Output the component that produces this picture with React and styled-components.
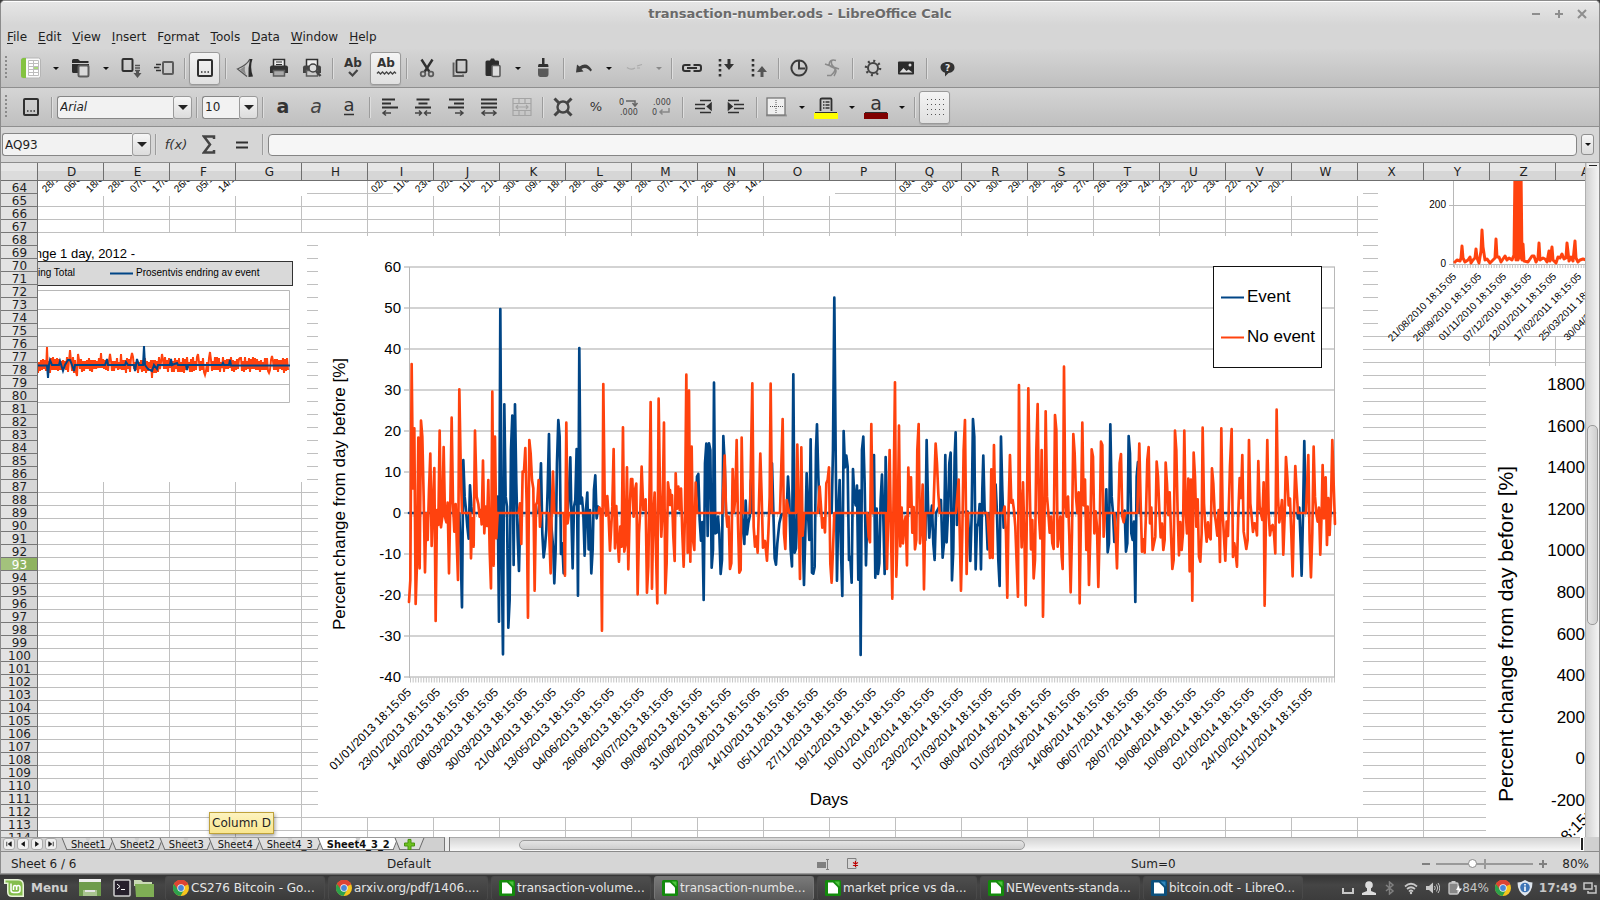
import React from "react";
import styled, { createGlobalStyle, css } from "styled-components";

const UI = `"DejaVu Sans", sans-serif`;
const UI_NARROW = `"DejaVu Sans Condensed", "DejaVu Sans", sans-serif`;
const CHART = `"Liberation Sans", Arial, sans-serif`;
const ORANGE = "#ff420e";
const BLUE = "#004586";
const INK = "#303030";
const SOFT = "#5c5c5c";

const GlobalStyle = createGlobalStyle`
  *, *::before, *::after { box-sizing: border-box; }
  body { margin: 0; background: #3c3c3c; overflow: hidden; }
  button, input { font: inherit; color: inherit; margin: 0; padding: 0; }
  button { border: 0; background: none; cursor: default; }
  svg { display: block; flex: none; }
`;

const Screen = styled.div`
  height: 100vh;
  display: flex;
  flex-direction: column;
  font: 12px/16px ${UI};
  color: #1f1f1f;
`;

const Window = styled.div`
  flex: 1;
  min-height: 0;
  display: flex;
  flex-direction: column;
  border: 1px solid #8c8c8c;
  border-bottom: 0;
  border-radius: 5px 5px 0 0;
  background: #d6d6d6;
  overflow: hidden;
`;

const TitleBar = styled.header`
  height: 24px;
  flex: none;
  display: grid;
  grid-template-columns: 1fr auto 1fr;
  align-items: center;
  padding: 0 12px;
  border-top: 1px solid #fff;
  background: linear-gradient(#e6e6e6, #d6d6d6);
`;

const Title = styled.h1`
  grid-column: 2;
  margin: 0;
  font: bold 13px/16px ${UI};
  color: #6a6a6a;
  text-shadow: 0 1px 0 #f4f4f4;
`;

const WindowButtons = styled.div`
  display: flex;
  justify-content: flex-end;
  gap: 13px;
  color: #8e8e8e;
`;

const MenuBar = styled.nav`
  height: 24px;
  flex: none;
  display: flex;
  align-items: center;
  padding-left: 1px;
`;

const MenuItem = styled.button`
  padding: 0 6px 0 5px;
  u { text-underline-offset: 2px; }
`;

const Toolbar = styled.div`
  height: 39px;
  flex: none;
  display: flex;
  align-items: center;
  padding-left: 4px;
  border-bottom: 1px solid #8f8f8f;
  background: linear-gradient(#d5d5d5, #bfbfbf);
`;

const Handle = styled.span`
  width: 9px;
  height: 24px;
  background: radial-gradient(circle at 1px 1px, #8a8a8a 1px, transparent 1px) 0 0 / 9px 4px;
`;

const ToolButton = styled.button`
  width: 33px;
  height: 33px;
  display: flex;
  align-items: center;
  justify-content: center;
  color: ${INK};
  ${(p) =>
    p.$on &&
    css`
      width: 31px;
      margin: 0 1px;
      border: 1px solid #9a9a9a;
      border-radius: 3px;
      background: linear-gradient(#f4f4f4, #e0e0e0);
      box-shadow: 0 1px 1px #aaa;
    `}
`;

const DropArrow = styled.button`
  width: 17px;
  height: 33px;
  display: flex;
  align-items: center;
  justify-content: center;
  opacity: ${(p) => (p.$dim ? 0.35 : 1)};
  &::after {
    content: "";
    border: 3px solid transparent;
    border-top-color: #111;
    border-bottom: 0;
  }
`;

const Sep = styled.span`
  width: 8px;
  height: 21px;
  background: linear-gradient(90deg, transparent 4px, #9c9c9c 4px, #9c9c9c 5px, #dedede 5px, #dedede 6px, transparent 6px);
`;

const Combo = styled.div`
  width: ${(p) => p.$w}px;
  height: 23px;
  flex: none;
  display: flex;
  margin-left: ${(p) => p.$gap}px;
`;

const ComboInput = styled.input`
  flex: 1;
  min-width: 0;
  height: 23px;
  padding-left: 2px;
  border: 1px solid #868686;
  border-right: 0;
  border-radius: 3px 0 0 3px;
  background: #f2f2f2;
  font-style: ${(p) => (p.$italic ? "italic" : "normal")};
  outline: 0;
`;

const ComboButton = styled.button`
  width: 19px;
  height: 23px;
  display: flex;
  align-items: center;
  justify-content: center;
  border: 1px solid #9a9a9a;
  border-radius: 3px;
  background: linear-gradient(#f6f6f6, #dcdcdc);
  &::after {
    content: "";
    border: 5px solid transparent;
    border-top-color: #222;
    border-bottom: 0;
  }
`;

const FormulaBar = styled.div`
  height: 36px;
  flex: none;
  display: flex;
  align-items: center;
  border-bottom: 1px solid #8c8c8c;
  background: #d6d6d6;
`;

const FormulaInput = styled.input`
  flex: 1;
  height: 22px;
  border: 1px solid #858585;
  border-radius: 4px;
  background: #f6f6f6;
  outline: 0;
  margin: 0 4px 0 2px;
`;

const FormulaExpand = styled.button`
  width: 13px;
  height: 21px;
  margin-right: 5px;
  display: flex;
  align-items: center;
  justify-content: center;
  border: 1px solid #8f8f8f;
  border-radius: 3px;
  background: linear-gradient(#f6f6f6, #dcdcdc);
  &::after {
    content: "";
    border: 3px solid transparent;
    border-top-color: #111;
    border-bottom: 0;
  }
`;

const Workspace = styled.main`
  flex: 1;
  min-height: 0;
  display: flex;
`;

const Sheet = styled.div`
  flex: 1;
  min-width: 0;
  display: grid;
  grid-template-columns: 37px 1fr;
  grid-template-rows: 18px 1fr;
  overflow: hidden;
`;

const Corner = styled.div`
  border-right: 1px solid #6f6f6f;
  border-bottom: 1px solid #6f6f6f;
  background: linear-gradient(#e6e6e6 50%, #dcdcdc 50%);
`;

const ColumnHeads = styled.div`
  display: flex;
  overflow: hidden;
  border-bottom: 1px solid #6f6f6f;
  background: linear-gradient(#e6e6e6 50%, #d6d6d6 50%);
`;

const ColumnHead = styled.div`
  flex: none;
  width: 66px;
  padding-left: 2px;
  line-height: 19px;
  text-align: center;
  border-right: 1px solid #6f6f6f;
`;

const RowHeads = styled.div`
  min-height: 0;
  overflow: hidden;
  border-right: 1px solid #6f6f6f;
  background: linear-gradient(90deg, #e3e3e3 50%, #d6d6d6 50%);
`;

const RowHead = styled.div`
  height: 13px;
  line-height: 15px;
  padding-left: 1px;
  text-align: center;
  border-bottom: 1px solid #777;
  ${(p) =>
    p.$active &&
    css`
      color: #fff;
      background: linear-gradient(90deg, #a3c27c 50%, #8fb360 50%);
    `}
`;

const Cells = styled.div`
  position: relative;
  min-height: 0;
  overflow: hidden;
  background:
    linear-gradient(90deg, transparent 65px, #c0c0c0 65px) 0 0 / 66px 13px,
    linear-gradient(transparent 12px, #c0c0c0 12px) 0 0 / 66px 13px,
    #fff;
`;

const ChartFrame = styled.figure`
  position: absolute;
  left: ${(p) => p.$x}px;
  top: ${(p) => p.$y}px;
  margin: 0;
  background: #fff;
  svg { overflow: ${(p) => (p.$spill ? "visible" : "hidden")}; }
`;

const Tip = styled.div`
  position: absolute;
  left: 171px;
  top: 631px;
  height: 22px;
  padding: 0 2px;
  line-height: 20px;
  border: 1px solid #bfa23a;
  background: linear-gradient(#fdf3bf, #f9e68f);
  box-shadow: 1px 2px 4px #0006;
`;

const VScroll = styled.div`
  width: 14px;
  flex: none;
  display: flex;
  flex-direction: column;
  align-items: center;
  border-left: 1px solid #b0b0b0;
  background: linear-gradient(90deg, #d2d2d2, #f4f4f4);
`;

const SplitGrip = styled.span`
  width: 12px;
  height: 5px;
  border: 2px solid #eee;
  border-width: 2px 2px;
  background: #222;
`;

const VThumb = styled.span`
  width: 11px;
  height: 200px;
  margin-top: 257px;
  border: 1px solid #9b9b9b;
  border-radius: 5px;
  background: linear-gradient(90deg, #e6e6e6, #cfcfcf);
`;

const TabStrip = styled.div`
  height: 15px;
  flex: none;
  display: flex;
  border-bottom: 1px solid #8a8a8a;
  background: #d0d0d0;
`;

const TabArea = styled.div`
  width: 444px;
  flex: none;
  display: flex;
  align-items: flex-start;
  border-top: 1px solid #9a9a9a;
  border-right: 1px solid #777;
`;

const TabNav = styled.div`
  display: flex;
  gap: 2px;
  padding: 0 7px 0 2px;
`;

const NavButton = styled.button`
  width: 12px;
  height: 12px;
  display: flex;
  align-items: center;
  justify-content: center;
  border: 1px solid #aaa;
  border-radius: 3px;
  background: #f0f0f0;
`;

const Tab = styled.button`
  position: relative;
  z-index: 0;
  height: 12px;
  padding: 0 7px;
  font: ${(p) => (p.$active ? "bold" : "normal")} 11px/11px ${UI_NARROW};
  color: #111;
  &::before, &::after {
    content: "";
    position: absolute;
    z-index: -1;
    top: 0;
    bottom: 0;
    border-bottom: 1px solid #777;
    background: ${(p) => (p.$active ? "#fff" : "#dedede")};
  }
  &::before { left: 0; right: 50%; border-left: 1px solid #666; transform: skewX(22deg); }
  &::after { left: 50%; right: 0; border-right: 1px solid #666; transform: skewX(-22deg); }
`;

const Splitter = styled.span`
  width: 5px;
  background: #ececec;
  border-right: 1px solid #777;
`;

const HScroll = styled.div`
  flex: 1;
  display: flex;
  align-items: center;
  border-top: 1px solid #aaa;
  background: linear-gradient(#d4d4d4, #f8f8f8);
`;

const HThumb = styled.span`
  width: 506px;
  height: 10px;
  margin-left: 69px;
  border: 1px solid #9b9b9b;
  border-radius: 5px;
  background: linear-gradient(#e4e4e4, #cecece);
`;

const HGrip = styled.span`
  width: 4px;
  margin-right: 15px;
  background: #222;
  border: 1px solid #fff;
`;

const StatusBar = styled.footer`
  height: 22px;
  flex: none;
  display: grid;
  grid-template-columns: 376fr 430fr 314fr 458fr;
  align-items: center;
  padding: 2px 10px 0;
  border-bottom: 1px solid #9a9a9a;
`;

const StatusIcons = styled.span`
  display: flex;
  align-items: center;
  gap: 18px;
`;

const StatusRight = styled.div`
  display: flex;
  justify-content: space-between;
`;

const Zoom = styled.div`
  display: flex;
  align-items: center;
  gap: 6px;
  color: #808080;
  output { width: 36px; text-align: right; color: #1f1f1f; }
`;

const ZoomSlider = styled.input`
  appearance: none;
  width: 97px;
  height: 12px;
  background:
    linear-gradient(#999, #999) 48px 1px / 2px 10px no-repeat,
    linear-gradient(#999, #999) 0 5px / 100% 2px no-repeat;
  &::-webkit-slider-thumb {
    appearance: none;
    width: 9px;
    height: 9px;
    border: 1px solid #8a8a8a;
    border-radius: 50%;
    background: #fff;
  }
`;

const TaskBar = styled.nav`
  height: 26px;
  flex: none;
  display: flex;
  align-items: center;
  padding: 0 3px 0 4px;
  color: #e6e6e6;
  border-top: 1px solid #6a6a6a;
  background: linear-gradient(#353535, #454545 40%, #3c3c3c);
`;

const StartButton = styled.button`
  display: flex;
  align-items: center;
  gap: 7px;
  width: 75px;
  font-weight: bold;
  color: #cfcfcf;
`;

const Launchers = styled.div`
  display: flex;
  align-items: center;
  width: 86px;
  gap: 3px;
  button:first-child { margin-right: 9px; }
`;

const TaskList = styled.div`
  flex: 1;
  min-width: 0;
  display: flex;
  gap: 3px;
`;

const TaskButton = styled.button`
  width: 160px;
  height: 24px;
  display: flex;
  align-items: center;
  gap: 2px;
  padding-left: 7px;
  white-space: nowrap;
  border-radius: 3px;
  border: 1px solid ${(p) => (p.$active ? "#777" : "#4a4a4a")};
  border-bottom: 0;
  background: ${(p) => (p.$active ? "linear-gradient(#7a7a7a, #585858)" : "linear-gradient(#4e4e4e, #3a3a3a)")};
`;

const Tray = styled.div`
  display: flex;
  align-items: center;
  gap: 6px;
  color: #c8c8c8;
`;

const TrayStatus = styled.div`
  display: flex;
  align-items: center;
  gap: 8px;
`;

const Battery = styled.span`
  display: flex;
  align-items: center;
`;

const Clock = styled.time`
  font-weight: bold;
`;

/* ---------- toolbar drawings ---------- */

const Ab = ({ children }) => (
  <>
    <text x="10" y="9" textAnchor="middle" fontFamily="DejaVu Sans" fontWeight="bold" fontSize="12" fill="#333">Ab</text>
    {children}
  </>
);

const glyphs = {
  sheet: (
    <>
      <rect x="0.5" y="0" width="19" height="20" rx="2" fill="#fafafa" stroke="#b5b5b5" />
      <path d="M2.500 0H5V20H2.500Q0 20 0 17.500V2.500Q0 0 2.500 0Z" fill="#84c341" />
      <path d="M7 2.500h10v15H7z" fill="#fff" />
      <path d="M12.500 8.500H17V12H12.500z" fill="#a8d97a" />
      <path d="M7.500 2.500h10v15h-10zM7.500 5.500h10M7.500 8.500h10M7.500 11.500h10M7.500 14.500h10M12.500 2.500v15" fill="none" stroke="#bdbdbd" />
    </>
  ),
  open: (
    <>
      <path d="M1 2.500Q1 1 2.500 1H7l2 2h8.500V5H1zM1 6H18V9H7V15H2.500Q1 15 1 13.500Z" fill="#2c2c2c" />
      <rect x="7.500" y="7.500" width="10" height="11" rx="1.500" fill="#dadada" stroke={SOFT} strokeWidth="2" />
    </>
  ),
  save: (
    <>
      <rect x="1.500" y="1" width="10" height="12" rx="1" fill="none" stroke={INK} strokeWidth="2" />
      <path d="M14 7.500h5M14 10h5M14 12.500h5" stroke="#555" strokeWidth="1.300" />
      <path d="M15 13h3v2h2.500l-4 5-4-5H15z" fill="#555" />
    </>
  ),
  mail: (
    <>
      <rect x="9" y="4" width="10" height="12" rx="1" fill="none" stroke={SOFT} strokeWidth="2" />
      <path d="M2 6.500h5M0 9.500h5.500M2 12.500h5" stroke={INK} strokeWidth="1.300" />
    </>
  ),
  doc: (
    <>
      <rect x="3" y="2" width="14" height="16" rx="1" fill="none" stroke={INK} strokeWidth="2" />
      <path d="M6 14h1.500M9.300 14h1.500M12.500 14h1.500" stroke={INK} strokeWidth="1.500" />
    </>
  ),
  pdf: (
    <>
      <path d="M14 1Q11 7 1.500 11L11 18.500" fill="none" stroke="#555" strokeWidth="1.300" />
      <path d="M14 1Q12 9 12.500 19L17 18.500Q13.500 9 16.500 1Z" fill="#2c2c2c" />
      <path d="M9 8Q8 12 10 17L4 11.500Z" fill="#8a8a8a" />
    </>
  ),
  print: (
    <>
      <path d="M4.500 8V1.500h11V8" fill="#eee" stroke={INK} strokeWidth="1.500" />
      <path d="M7 4h6M7 6.500h6" stroke={INK} />
      <path d="M3 7.500H17Q19 7.500 19 9.500V15H1V9.500Q1 7.500 3 7.500Z" fill="#333" />
      <path d="M4.500 12.500h11V18h-11z" fill="#aaa" stroke={SOFT} strokeWidth="1.500" />
    </>
  ),
  preview: (
    <>
      <path d="M4.500 8V1.500h11V8" fill="#eee" stroke={INK} strokeWidth="1.500" />
      <path d="M3 7.500H17Q19 7.500 19 9.500V15H1V9.500Q1 7.500 3 7.500Z" fill="#444" />
      <path d="M4.500 12.500h11V18h-11z" fill="#ccc" stroke={SOFT} strokeWidth="1.500" />
      <circle cx="11" cy="10" r="4" fill="#ddd" stroke="#444" strokeWidth="1.500" />
      <path d="M14 13l4.500 5" stroke="#444" strokeWidth="2.500" />
    </>
  ),
  spell: <Ab><path d="M6 14l3.500 3.500 5-5.500" fill="none" stroke="#444" strokeWidth="2.200" /></Ab>,
  autospell: <Ab><path d="M1 15.500l1.500-1.500 2 2 2-2 2 2 2-2 2 2 2-2 2 2 2-2 1.500 1.500" fill="none" stroke="#444" strokeWidth="1.300" /></Ab>,
  cut: (
    <>
      <path d="M4.500 1.500L12.500 14M15.500 1.500L7.500 14" stroke={INK} strokeWidth="2.400" />
      <circle cx="6" cy="16" r="2.300" fill="none" stroke={SOFT} strokeWidth="1.800" />
      <circle cx="14" cy="16" r="2.300" fill="none" stroke={SOFT} strokeWidth="1.800" />
    </>
  ),
  copy: (
    <>
      <path d="M4.500 5.500H3.500V18H13V16.500" fill="none" stroke={SOFT} strokeWidth="1.800" />
      <rect x="6.500" y="1.800" width="10" height="12.500" rx="1" fill="none" stroke={INK} strokeWidth="1.800" />
    </>
  ),
  paste: (
    <>
      <path d="M4 2.500H7L8 .5h3l1 2h3Q16 2.500 16 4V7H9v11H4Q2.500 18 2.500 16.500V4Q2.500 2.500 4 2.500Z" fill="#2c2c2c" />
      <rect x="9" y="7.500" width="8" height="11" rx="1" fill="#dcdcdc" stroke={SOFT} strokeWidth="1.600" />
    </>
  ),
  brush: (
    <>
      <path d="M9 0h2.500v6h3q1 0 1 3H5q0-3 1-3h3z" fill={INK} />
      <path d="M5 10.500H15.500V16Q15.500 19 13 19H7.500Q5 19 5 16z" fill="#5a5a5a" />
    </>
  ),
  undo: <path d="M2 14.500L3 6.500 5.500 8.500Q13 3 18 12L16.500 13.500Q12.500 8 7.500 11L9.500 13.500Z" fill="#3c3c3c" />,
  redo: <path d="M3 9.500q4 3 8 .5M13 8l5-1.500M13 10h3" fill="none" stroke="#aaa" strokeWidth="1.200" />,
  link: (
    <>
      <path d="M8.500 7H3Q1 7 1 9v2q0 2 2 2h5.500M11.500 7H17q2 0 2 2v2q0 2-2 2h-5.500" fill="none" stroke={INK} strokeWidth="2" />
      <path d="M5 10h10" stroke={INK} strokeWidth="2" />
    </>
  ),
  sortDown: (
    <>
      <path d="M5 1v18" stroke={INK} strokeWidth="2.600" strokeDasharray="2.600 2.400" />
      <path d="M12.500 1h3v5H19l-5 6-5-6h3.500z" fill="#333" />
    </>
  ),
  sortUp: (
    <>
      <path d="M5 1v18" stroke={INK} strokeWidth="2.600" strokeDasharray="2.600 2.400" />
      <path d="M12.500 19h3v-5H19l-5-6-5 6h3.500z" fill="#555" />
    </>
  ),
  chart: <path d="M10 2.500a7.500 7.500 0 1 1-.01 0V10.500H16" fill="none" stroke="#3a3a3a" strokeWidth="2" />,
  draw: (
    <path d="M14 2.500Q9 1 7.500 4.500T11 9.500 9 17.500H5M3 6l14 5M10 2q-2 4 2 7t0 9" fill="none" stroke="#8a8a8a" strokeWidth="1.500" />
  ),
  gear: (
    <>
      <circle cx="10" cy="10" r="5" fill="none" stroke="#444" strokeWidth="2" />
      <circle cx="10" cy="10" r="7" fill="none" stroke="#444" strokeWidth="2.600" strokeDasharray="2 3.500" />
    </>
  ),
  gallery: (
    <>
      <rect x="2" y="3.500" width="16" height="13" rx="1" fill="#2c2c2c" />
      <path d="M3.500 14.500l4-4.500 3 3 2-1.500 4 3z" fill="#ddd" />
      <circle cx="14" cy="7" r="1.500" fill="#ddd" />
    </>
  ),
  help: (
    <>
      <path d="M10.500 4c4.500 0 7 2.300 7 5.500s-2.500 5.300-6 5.500L8 18.500V14.800C5.500 14 3.500 12.200 3.500 9.500 3.500 6.300 6 4 10.500 4z" fill="#333" />
      <text x="10.500" y="13" textAnchor="middle" fontFamily="DejaVu Sans" fontWeight="bold" fontSize="9" fill="#e4e4e4">?</text>
    </>
  ),
  bold: <text x="10" y="16" textAnchor="middle" fontFamily="DejaVu Sans" fontWeight="bold" fontSize="19" fill="#333">a</text>,
  italic: <text x="10" y="16" textAnchor="middle" fontFamily="DejaVu Sans" fontStyle="italic" fontSize="19" fill="#444">a</text>,
  underline: (
    <>
      <text x="10" y="14" textAnchor="middle" fontFamily="DejaVu Sans" fontSize="18" fill="#333">a</text>
      <path d="M5 17.500h10" stroke={INK} strokeWidth="1.500" />
    </>
  ),
  left: <><path d="M2 2.500h13M2 6.500h9M2 10.500h16" stroke={INK} strokeWidth="1.800" /><path d="M3 16h8M6 13.500L3 16l3 2.500" fill="none" stroke="#444" strokeWidth="1.500" /></>,
  center: <><path d="M3.500 2.500h13M5.500 6.500h9M2 10.500h16" stroke={INK} strokeWidth="1.800" /><path d="M2 16h6M6 13.500L8.500 16 6 18.500M18 16h-6M14 13.500L11.500 16l2.500 2.500" fill="none" stroke="#444" strokeWidth="1.500" /></>,
  right: <><path d="M3 2.500h15M8 6.500h10M2 10.500h16" stroke={INK} strokeWidth="1.800" /><path d="M9 16h8M14 13.500l3 2.500-3 2.500" fill="none" stroke="#444" strokeWidth="1.500" /></>,
  justify: <><path d="M2 2.500h16M2 6.500h16M2 10.500h16" stroke={INK} strokeWidth="1.800" /><path d="M3 16h14M6 13.500L3 16l3 2.500M14 13.500l3 2.500-3 2.500" fill="none" stroke="#444" strokeWidth="1.500" /></>,
  merge: (
    <path d="M1 1.500h18v17H1zM1 6.500h18M1 13.500h18M7 1.500v5M13 1.500v5M7 13.500v5M13 13.500v5M4 10h12M6 8l-2 2 2 2M14 8l2 2-2 2" fill="none" stroke="#a4a4a4" strokeWidth="1.200" />
  ),
  currency: (
    <>
      <circle cx="10" cy="10" r="5.500" fill="none" stroke="#444" strokeWidth="2.400" />
      <path d="M1.500 1.500L6 6M18.500 1.500L14 6M1.500 18.500L6 14M18.500 18.500L14 14" stroke="#444" strokeWidth="3" />
    </>
  ),
  percent: <text x="10" y="14" textAnchor="middle" fontFamily="DejaVu Sans" fontSize="13" fill="#333">%</text>,
  addDecimal: (
    <>
      <text x="0" y="8" fontFamily="DejaVu Sans" fontSize="8" fill="#333">0</text>
      <text x="1" y="18" fontFamily="DejaVu Sans" fontSize="8" fill="#444">.000</text>
      <path d="M7 4h9v4M13.500 6L16 9l2.500-3" fill="none" stroke="#666" strokeWidth="1.500" />
    </>
  ),
  delDecimal: (
    <>
      <text x="1" y="8" fontFamily="DejaVu Sans" fontSize="8" fill="#444">.000</text>
      <text x="0" y="18" fontFamily="DejaVu Sans" fontSize="8" fill="#444">0</text>
      <path d="M17 11v4H8M10.500 12.500L8 15l2.500 2.500" fill="none" stroke="#888" strokeWidth="1.500" />
    </>
  ),
  outdent: <path d="M7 3.500h11M2 7.500h10M2 11.500h10M7 15.500h11M18 6.500v6L14.500 9.500z" fill={INK} stroke={INK} strokeWidth="1.600" />,
  indent: <path d="M2 3.500h11M8 7.500h10M8 11.500h10M2 15.500h11M2.500 6.500v6L6 9.500z" fill={INK} stroke={INK} strokeWidth="1.600" />,
  borders: (
    <>
      <path d="M-1 18.500h21" stroke="#999" strokeWidth="2" />
      <rect x="0" y="1" width="18" height="17" fill="#f0f0f0" stroke="#777" strokeWidth="1.300" />
      <path d="M9 3v13M3 9.500h13" stroke="#555" strokeDasharray="1 1" />
    </>
  ),
  background: (
    <>
      <path d="M3.500 14V2.500Q3.500 1.500 5 1.500h8.500Q14.500 1.500 14.500 2.500V14" fill="none" stroke={INK} strokeWidth="1.800" />
      <path d="M6 5h1.500M6 8h1.500M6 11h1.500M8.500 5h4M8.500 8h4M8.500 11h4" stroke={INK} strokeWidth="1.600" />
      <path d="M-3 16h24v6H-3z" fill="#ff0" />
      <path d="M-2 15.500h22" stroke={INK} />
    </>
  ),
  fontColor: (
    <>
      <text x="9" y="13" textAnchor="middle" fontFamily="DejaVu Sans" fontSize="19" fill="#333">a</text>
      <path d="M-3 16h24v6H-3z" fill="#800000" />
      <path d="M-2 15.500h22" stroke={INK} />
    </>
  ),
  grid: (
    <path d="M2 2.500h17M2 7.500h17M2 12.500h17M2 17.500h17" stroke="#555" strokeDasharray="1 3" />
  ),
};

const Glyph = ({ name }) => (
  <svg width="20" height="20" viewBox="0 0 20 20" overflow="visible" aria-hidden="true">{glyphs[name]}</svg>
);

const standardTools = [
  "sheet", "v", "open", "v", "save", "mail", "|", "doc*", "|", "pdf", "print", "preview", "|", "spell", "autospell*", "|",
  "cut", "copy", "paste", "v", "brush", "|", "undo", "v", "redo", "w", "|", "link", "sortDown", "sortUp", "|",
  "chart", "draw", "|", "gear", "gallery", "|", "help",
];
const formatTools = [
  "bold", "italic", "underline", "|", "left", "center", "right", "justify", "merge", "|",
  "currency", "percent", "addDecimal", "delDecimal", "|", "outdent", "indent", "|",
  "borders", "v", "background", "v", "fontColor", "v", "|", "grid*",
];

const Tools = ({ items }) =>
  items.map((item, i) => {
    if (item === "|") return <Sep key={i} />;
    if (item === "v" || item === "w") return <DropArrow key={i} $dim={item === "w"} aria-label="More" />;
    const on = item.endsWith("*");
    const name = on ? item.slice(0, -1) : item;
    return (
      <ToolButton key={i} $on={on} aria-label={name} aria-pressed={on}>
        <Glyph name={name} />
      </ToolButton>
    );
  });

/* ---------- chart data: three runs of each series, three units to a pixel ---------- */

const runs = [
  {
    x: 320,
    event:
      "267,789 418,789 422,900 426,1072 430,630 434,740 438,780 442,830 446,866 450,706 454,770 456,789 529,789 533,740 537,1115 541,177 545,900 549,1213 553,463 557,740 561,770 565,1133 569,1050 573,600 577,497 581,945 585,463 589,700 593,860 597,963 601,789 655,789 659,750 663,640 667,850 671,922 675,890 679,840 683,720 687,552 691,789 700,900 703,1000 707,900 711,640 715,510 719,560 723,912 727,880 731,970 735,789 743,789 747,730 751,622 755,830 758,955 762,770 766,750 770,597 774,1037 778,294 782,760 786,743 790,790 794,917 798,780 802,728 806,898 810,780 814,970 818,900 822,720 826,676 830,805 834,770 838,789 1050,789",
    other:
      "267,1056 271,990 275,342 279,715 283,535 287,1062 291,940 295,563 299,955 303,512 307,560 311,740 315,967 319,790 323,870 327,720 331,611 335,888 339,760 343,654 347,1113 351,780 355,825 359,542 363,832 367,800 371,591 375,800 379,817 383,758 387,970 391,760 395,503 399,760 403,845 407,762 411,900 414,990 418,418 422,640 426,789 451,789 453,925 457,805 461,890 465,542 470,740 475,762 479,800 482,780 485,823 489,632 493,850 497,770 501,828 505,690 509,900 513,1015 517,425 521,947 525,560 529,865 533,789 596,789 600,760 604,882 608,665 612,665 616,594 620,760 624,1103 628,570 632,610 636,690 640,715 644,1022 648,765 652,755 656,690 660,830 663,789 686,789 688,860 692,970 695,789 699,665 703,789 731,789 735,977 739,518 743,820 747,789 836,789 838,772 842,780 846,1142 850,402 854,735 858,797 862,738 866,800 870,902 877,770 881,597 885,895 889,768 893,870 897,935 901,830 905,890 909,532 913,905 917,880 921,652 925,958 930,760 933,687 937,687 941,800 945,720 949,701 953,1033 957,850 961,780 965,650 970,780 977,748 981,1028 985,950 989,700 992,456 996,1016 1000,800 1004,728 1008,900 1012,1060 1016,446 1020,720 1024,860 1028,780 1032,518 1036,1030 1040,940 1044,697 1048,730 1050,765",
  },
  {
    x: 670,
    event:
      "0,789 77,789 81,680 85,672 89,810 93,872 97,816 101,1050 105,640 109,581 113,858 117,580 121,600 125,953 129,900 132,398 136,850 140,848 144,800 148,850 152,972 156,930 160,558 164,640 168,789 216,789 220,850 223,882 227,752 231,853 235,820 239,800 243,690 247,789 302,789 306,640 310,780 314,925 318,944 322,880 328,820 334,794 350,789 354,680 358,750 362,900 366,949 370,373 374,908 378,895 382,789 394,789 398,857 402,1005 406,850 410,670 414,789 418,870 422,568 426,968 430,971 434,950 438,600 441,523 445,680 449,789 485,789 489,600 493,143 497,600 501,992 505,789 509,690 513,900 517,1038 521,543 525,652 529,617 533,650 537,930 541,920 545,998 549,657 553,740 557,766 561,707 565,989 569,722 572,1215 576,600 580,560 584,700 588,946 592,789 608,789 612,615 616,983 620,776 624,972 628,940 632,750 636,674 640,800 644,972 647,621 651,789 762,789 766,870 770,570 774,760 778,863 782,800 786,767 790,880 794,930 798,789 808,770 813,750 818,923 822,880 826,615 830,877 834,790 838,640 842,608 846,991 850,900 854,620 857,547 861,825 865,789 893,785 897,850 901,933 905,800 909,507 913,560 917,958 921,830 925,820 929,762 933,958 937,720 940,617 944,780 949,800 953,898 957,789 970,789 977,704 981,789 985,930 989,1008 993,560 997,720 1001,833 1005,789 1050,789",
    other:
      "0,720 3,765 6,735 10,860 14,933 17,670 21,776 25,710 29,780 33,716 37,850 41,950 45,789 49,374 53,908 57,422 61,935 65,590 69,870 73,900 77,698 81,789 157,789 164,617 168,780 172,830 176,800 180,957 184,940 188,657 192,787 196,740 200,570 204,820 208,968 212,960 215,563 219,789 240,789 247,400 251,830 255,890 259,860 263,908 267,760 271,611 275,740 279,893 285,873 291,932 295,850 299,740 302,401 306,789 330,789 334,650 338,507 342,850 346,897 350,750 354,770 358,789 378,789 382,584 386,789 390,987 394,592 398,857 402,789 444,789 449,710 453,770 457,833 461,805 465,847 469,700 473,690 477,652 481,940 485,998 489,900 493,789 592,789 596,860 600,877 604,522 608,789 648,789 651,957 655,789 659,600 663,850 667,1046 671,720 675,397 679,980 683,850 687,527 691,889 695,773 699,880 703,820 707,800 711,946 715,653 719,770 723,682 727,848 731,771 735,898 739,870 742,600 746,522 750,880 754,830 758,704 762,1018 766,789 790,789 797,581 801,640 805,730 809,789 858,789 866,689 873,1022 877,850 881,600 885,510 890,972 894,789 952,789 956,850 960,924 964,658 968,924 972,585 976,789 1000,789 1004,770 1008,850 1012,1043 1016,770 1020,615 1024,758 1028,750 1032,780 1036,830 1044,1040 1047,405 1050,720",
  },
  {
    x: 1020,
    event:
      "0,789 252,789 256,789 259,718 263,907 267,880 271,523 275,740 279,789 283,876 287,789 310,789 314,782 318,905 322,880 326,558 330,610 334,850 338,870 342,815 346,1056 350,680 354,636 358,789 832,789 834,805 838,773 842,880 845,977 849,800 853,573 857,789 945,789",
    other:
      "0,720 5,892 9,697 13,850 17,1066 21,760 25,415 29,700 33,898 37,810 41,985 45,930 49,600 53,462 57,800 61,865 65,600 69,1100 73,850 77,484 81,740 85,789 89,848 93,800 97,880 101,897 105,495 109,540 113,890 117,850 121,800 125,920 128,957 132,350 136,760 140,800 144,740 148,860 152,1027 156,850 160,552 164,610 168,740 172,789 176,727 179,1060 183,789 187,518 191,766 195,689 199,900 203,770 207,1005 211,850 215,598 219,620 223,850 227,784 231,830 235,1011 239,850 243,575 247,585 251,860 255,789 283,789 287,850 291,955 295,789 299,640 303,612 307,800 311,817 315,789 352,789 358,581 362,760 366,905 370,868 374,908 378,789 382,630 386,591 390,820 394,773 398,900 402,880 406,860 410,635 414,680 418,780 422,862 426,821 430,900 434,870 437,638 441,700 445,795 449,727 453,850 457,957 461,930 465,542 469,600 473,789 477,916 481,816 485,900 489,850 493,542 497,780 501,850 505,686 509,964 513,689 517,1052 521,608 525,680 529,830 533,748 537,920 541,935 545,850 548,533 552,760 556,830 560,875 564,817 568,860 572,868 576,655 580,700 584,789 588,820 592,857 596,780 600,936 604,535 608,789 616,932 620,815 624,858 630,650 635,537 639,921 643,880 647,910 651,950 655,789 659,684 663,744 667,615 671,845 675,870 679,897 683,870 687,570 691,760 695,800 699,846 703,820 707,822 711,856 715,633 719,770 723,789 727,810 731,697 734,1067 738,789 742,570 746,789 750,856 754,830 758,825 762,850 766,910 770,479 774,740 778,817 782,789 786,750 790,914 794,800 798,621 802,680 806,766 810,746 814,850 818,979 822,789 826,648 830,720 834,789 858,789 865,615 869,870 873,982 877,850 881,590 885,740 889,789 893,815 897,773 901,914 905,789 908,645 912,805 917,682 921,885 925,744 929,855 933,760 937,570 941,700 945,822",
  },
];

const days = [
  "01/01/2013", "23/01/2013", "14/02/2013", "08/03/2013", "30/03/2013", "21/04/2013", "13/05/2013", "04/06/2013",
  "26/06/2013", "18/07/2013", "09/08/2013", "31/08/2013", "22/09/2013", "14/10/2013", "05/11/2013", "27/11/2013",
  "19/12/2013", "10/01/2014", "01/02/2014", "23/02/2014", "17/03/2014", "08/04/2014", "01/05/2014", "23/05/2014",
  "14/06/2014", "06/07/2014", "28/07/2014", "19/08/2014", "10/09/2014", "02/10/2014", "24/10/2014", "15/11/2014",
];

const Slanted = ({ x, y, size, anchor = "end", children }) => (
  <text x={x} y={y} fontSize={size} textAnchor={anchor} transform={`rotate(-45 ${x} ${y})`}>{children}</text>
);

const MainChart = () => (
  <svg width="1045" height="581" viewBox="318 236 1045 581" fontFamily={CHART} role="img" aria-label="Percent change from day before">
    {[60, 50, 40, 30, 20, 10, 0, -10, -20, -30, -40].map((v) => {
      const y = Math.round(513 - v * 4.107);
      return (
        <g key={v}>
          <path d={`M404 ${y}H1335`} stroke="#c4c4c4" strokeWidth="1.500" />
          <text x="401" y={y + 5} fontSize="15" textAnchor="end">{v}</text>
        </g>
      );
    })}
    <path d="M409.500 267V678M1334.500 267V678" stroke="#b8b8b8" />
    <path d="M410 680H1335" stroke="#c4c4c4" strokeWidth="5" strokeDasharray="1 1.640" />
    <path d="M410 515H1335" stroke="#c4c4c4" strokeWidth="4" strokeDasharray="1 1.640" />
    {["event", "other"].map((series) => (
      <g key={series} fill="none" stroke={series === "event" ? BLUE : ORANGE} strokeWidth="8" strokeLinejoin="round" strokeLinecap="round">
        {runs.map((run) => (
          <g key={run.x} transform={`translate(${run.x} 250) scale(0.3333)`}>
            <polyline points={run[series]} />
          </g>
        ))}
      </g>
    ))}
    {days.map((d, i) => (
      <Slanted key={d} x={Math.round(412 + i * 29.07)} y={693} size="12">{`${d} 18:15:05`}</Slanted>
    ))}
    <text x="829" y="805" fontSize="17" textAnchor="middle">Days</text>
    <text x="345" y="494" fontSize="17" textAnchor="middle" transform="rotate(-90 345 494)">Percent change from day before [%]</text>
    <rect x="1213.500" y="266.500" width="108" height="101" fill="#fff" stroke="#111" />
    <path d="M1221 297.500h23" stroke={BLUE} strokeWidth="2" />
    <path d="M1221 337.500h23" stroke={ORANGE} strokeWidth="2" />
    <text x="1247" y="302" fontSize="17">Event</text>
    <text x="1247" y="342" fontSize="17">No event</text>
  </svg>
);

const noise = (i) => {
  const s = Math.sin(i * 12.9898) * 43758.5453;
  return s - Math.floor(s);
};

const overviewPeaks = { 47: 347, 70: 350, 77: 376, 78: 354, 101: 353, 110: 354, 121: 354, 132: 353, 152: 378, 162: 354, 198: 354, 205: 375, 210: 352, 240: 358, 272: 356, 269: 373 };
const overviewLine = Array.from({ length: 252 }, (_, i) => {
  const x = 37 + i;
  const y = overviewPeaks[x] || 365 + (i % 2 ? 1 : -1) * (3 + Math.round(noise(i) * 5));
  return `${x},${y}`;
}).join(" ");

const OverviewChart = () => (
  <svg width="269" height="249" viewBox="38 233 269 249" fontFamily={CHART} role="img" aria-label="Change 1 day, 2012">
    <text x="135" y="258" fontSize="13" textAnchor="end">nge 1 day, 2012 -</text>
    <rect x="20.500" y="261.500" width="272" height="24" fill="#d9d9d9" stroke="#333" />
    <text x="75" y="276" fontSize="10" textAnchor="end">ing Total</text>
    <path d="M110 273.500h23" stroke={BLUE} strokeWidth="2" />
    <text x="136" y="276" fontSize="10">Prosentvis endring av event</text>
    <path d="M30 290.500H289.500V402.500H30M30 309.500H289M30 328.500H289M30 346.500H289M30 384.500H289" fill="none" stroke="#b8b8b8" />
    <polyline points={overviewLine} fill="none" stroke={ORANGE} strokeWidth="2" />
    <path
      d="M38 365.500H47L48 378 49 365 50 360 52 365H59L60 361 63 371 65 365 68 360 70 360 72 365 74 371 75 365H105L107 359 108 365H125L126 362 128 365H134L135 371 137 359 139 365H143L144 346 145 365 148 369 152 371 154 365 157 369 158 365H170L171 359 172 365 177 363 178 365H186L187 370 188 365H222L223 363 224 365H229L230 360 231 365.500H290"
      fill="none" stroke={BLUE} strokeWidth="2"
    />
  </svg>
);

const VolumeChart = () => (
  <svg width="240" height="155" viewBox="1378 181 240 155" fontFamily={CHART} role="img" aria-label="Percent change since 2010">
    <path d="M1453.500 181V267M1449 205.500H1620M1449 264.500H1620" stroke="#b8b8b8" />
    <path d="M1454 266H1620" stroke="#c4c4c4" strokeWidth="4" strokeDasharray="1 1.640" />
    <text x="1446" y="208" fontSize="10" textAnchor="end">200</text>
    <text x="1446" y="267" fontSize="10" textAnchor="end">0</text>
    <polyline
      fill="none" stroke={ORANGE} strokeWidth="3" strokeLinejoin="round"
      points="1454,263 1457,260 1460,261 1461,258 1462,246 1463,258 1465,262 1468,260 1470,257 1471,263 1473,260 1475,258 1476,249 1477,258 1479,263 1481,251 1482,230 1483,247 1485,260 1487,259 1490,263 1493,260 1495,258 1496,239 1497,257 1499,257 1501,262 1503,259 1505,256 1507,260 1509,258 1512,260 1514,255 1515,170 1516,260 1517,170 1518,260 1519,181 1520,258 1521,170 1522,260 1523,244 1524,261 1528,262 1530,259 1532,256 1534,256 1536,262 1538,258 1539,243 1540,260 1543,258 1545,259 1547,262 1549,251 1550,261 1552,247 1553,260 1556,263 1558,257 1560,258 1562,254 1564,259 1566,258 1567,243 1568,252 1569,261 1571,257 1573,261 1575,241 1576,258 1578,262 1580,260 1583,259 1590,261"
    />
    {["21/08/2010", "26/09/2010", "01/11/2010", "07/12/2010", "12/01/2011", "17/02/2011", "25/03/2011", "30/04/2011"].map((d, i) => (
      <Slanted key={d} x={1457 + i * 25} y={277} size="10">{`${d} 18:15:05`}</Slanted>
    ))}
  </svg>
);

const RangeChart = () => (
  <svg width="240" height="471" viewBox="1486 366 240 471" fontFamily={CHART} role="img" aria-label="Percent change, full range">
    {[1800, 1600, 1400, 1200, 1000, 800, 600, 400, 200, 0, -200].map((v, i) => (
      <text key={v} x="1585" y={Math.round(390 + i * 41.6)} fontSize="17" textAnchor="end">{v}</text>
    ))}
    <text x="1513" y="634" fontSize="21" textAnchor="middle" transform="rotate(-90 1513 634)">Percent change from day before [%]</text>
    <Slanted x={1561} y={849} size="16" anchor="start">18:15:05</Slanted>
  </svg>
);

const LabelStrip = ({ w, origin, first, step, labels }) => (
  <svg width={w} height="15" viewBox={`${origin} 181 ${w} 15`} fontFamily={CHART} aria-hidden="true">
    {labels.split(" ").map((l, i) => (
      <Slanted key={i} x={Math.round(first + i * step) + 5} y={193} size="10" anchor="start">{l}</Slanted>
    ))}
  </svg>
);

/* ---------- panel drawings ---------- */

const Chrome = () => (
  <svg width="16" height="16" viewBox="0 0 16 16" aria-hidden="true">
    <circle cx="8" cy="8" r="8" fill="#f7c51e" />
    <path d="M8 8L1 4A8 8 0 0 1 15 4.200Z" fill="#dd4433" />
    <path d="M8 8L1 4A8 8 0 0 0 7.500 16L11 10Z" fill="#2da14c" />
    <path d="M8 4.300H15.200A8 8 0 0 0 1 4L4.500 9Z" fill="#dd4433" />
    <circle cx="8" cy="8" r="3.700" fill="#f4f4f4" />
    <circle cx="8" cy="8" r="2.900" fill="#4a86d8" />
  </svg>
);

const Office = ({ color, light }) => (
  <svg width="16" height="16" viewBox="0 0 16 16" aria-hidden="true">
    <rect width="16" height="16" rx="1.500" fill={color} />
    <path d="M3 2.500H8L13 7.500V13.500H3Z" fill="#fff" />
    <path d="M9.500 1.500H14.500V6.500Z" fill={light} />
  </svg>
);

const tasks = [
  ["CS276 Bitcoin - Go...", "chrome"],
  ["arxiv.org/pdf/1406....", "chrome"],
  ["transaction-volume...", "calc"],
  ["transaction-numbe...", "calc", true],
  ["market price vs da...", "calc"],
  ["NEWevents-standa...", "calc"],
  ["bitcoin.odt - LibreO...", "writer"],
];

const taskIcons = {
  chrome: <Chrome />,
  calc: <Office color="#138a0c" light="#4cc53c" />,
  writer: <Office color="#0b4f7c" light="#2f86bd" />,
};

const columns = "D E F G H I J K L M N O P Q R S T U V W X Y Z AA".split(" ");
const rows = Array.from({ length: 51 }, (_, i) => 64 + i);
const menus = ["File", "Edit", "View", "Insert", "Format", "Tools", "Data", "Window", "Help"];
const navPaths = ["M1 1v6M7 1v6L3 4z", "M6 1v6L2 4z", "M2 1v6L6 4z", "M7 1v6M1 1v6L5 4z"];

export default function App() {
  return (
    <Screen>
      <GlobalStyle />
      <Window>
        <TitleBar>
          <Title>transaction-number.ods - LibreOffice Calc</Title>
          <WindowButtons>
            {["M1 5h8", "M1 5h8M5 1v8", "M1 1l8 8M9 1L1 9"].map((d) => (
              <button key={d} aria-label="Window control">
                <svg width="10" height="10" viewBox="0 0 10 10"><path d={d} stroke="currentColor" strokeWidth="2" /></svg>
              </button>
            ))}
          </WindowButtons>
        </TitleBar>
        <MenuBar>
          {menus.map((m) => (
            <MenuItem key={m}>
              {m === "Format" ? <span>F<u>o</u>rmat</span> : <span><u>{m[0]}</u>{m.slice(1)}</span>}
            </MenuItem>
          ))}
        </MenuBar>
        <Toolbar>
          <Handle />
          <Tools items={standardTools} />
        </Toolbar>
        <Toolbar>
          <Handle />
          <Tools items={["doc", "|"]} />
          <Combo $w={135} $gap={2}>
            <ComboInput $italic aria-label="Font name" defaultValue="Arial" />
            <ComboButton aria-label="Font list" />
          </Combo>
          <Sep />
          <Combo $w={56} $gap={2}>
            <ComboInput aria-label="Font size" defaultValue="10" />
            <ComboButton aria-label="Size list" />
          </Combo>
          <Sep />
          <Tools items={formatTools} />
        </Toolbar>
        <FormulaBar>
          <Combo $w={149} $gap={1}>
            <ComboInput aria-label="Name box" defaultValue="AQ93" />
            <ComboButton aria-label="Name list" />
          </Combo>
          <Sep />
          <ToolButton aria-label="Function wizard">
            <svg width="22" height="20" viewBox="0 0 22 20">
              <text x="11" y="14" textAnchor="middle" fontFamily="DejaVu Sans" fontStyle="italic" fontSize="13" fill="#333">f(x)</text>
            </svg>
          </ToolButton>
          <ToolButton aria-label="Sum">
            <svg width="14" height="20" viewBox="0 0 14 20"><path d="M12 4V1.500H2L8 9.500 2 17.500H12V15" fill="none" stroke="#444" strokeWidth="2.500" /></svg>
          </ToolButton>
          <ToolButton aria-label="Function">
            <svg width="12" height="20" viewBox="0 0 12 20"><path d="M0 7.500h12M0 12.500h12" stroke={INK} strokeWidth="2" /></svg>
          </ToolButton>
          <Sep />
          <FormulaInput aria-label="Input line" />
          <FormulaExpand aria-label="Expand formula bar" />
        </FormulaBar>

        <Workspace>
          <Sheet>
            <Corner />
            <ColumnHeads>{columns.map((c) => <ColumnHead key={c}>{c}</ColumnHead>)}</ColumnHeads>
            <RowHeads>{rows.map((r) => <RowHead key={r} $active={r === 93}>{r}</RowHead>)}</RowHeads>
            <Cells>
              <ChartFrame $x={0} $y={0} $spill>
                <LabelStrip w={269} origin={38} first={41} step={22} labels="28/1 06/0 18/0 28/0 07/0 17/0 26/0 05/1 14/1" />
              </ChartFrame>
              <ChartFrame $x={355} $y={0} $spill>
                <LabelStrip w={442} origin={393} first={370} step={22} labels="02/0 11/0 23/0 02/0 11/0 21/0 30/0 09/1 18/1 28/1 06/0 18/0 28/0 07/0 17/0 26/0 05/1 14/1" />
              </ChartFrame>
              <ChartFrame $x={883} $y={0} $spill>
                <LabelStrip w={442} origin={921} first={898} step={21.7} labels="03/0 03/0 02/0 01/0 30/0 29/1 28/1 26/0 27/0 26/0 25/0 24/1 23/1 22/0 23/0 22/0 21/0 20/1" />
              </ChartFrame>
              <ChartFrame $x={0} $y={52}><OverviewChart /></ChartFrame>
              <ChartFrame $x={280} $y={55}><MainChart /></ChartFrame>
              <ChartFrame $x={1340} $y={0} $spill><VolumeChart /></ChartFrame>
              <ChartFrame $x={1448} $y={185}><RangeChart /></ChartFrame>
              <Tip role="tooltip">Column D</Tip>
            </Cells>
          </Sheet>
          <VScroll>
            <SplitGrip />
            <VThumb />
          </VScroll>
        </Workspace>

        <TabStrip>
          <TabArea>
            <TabNav>
              {navPaths.map((d) => (
                <NavButton key={d} aria-label="Scroll sheets">
                  <svg width="6" height="6" viewBox="0 0 8 8"><path d={d} fill="#111" stroke="#111" strokeWidth="1" /></svg>
                </NavButton>
              ))}
            </TabNav>
            {["Sheet1", "Sheet2", "Sheet3", "Sheet4", "Sheet4_3"].map((t) => <Tab key={t}>{t}</Tab>)}
            <Tab $active>Sheet4_3_2</Tab>
            <Tab aria-label="Insert sheet">
              <svg width="11" height="11" viewBox="0 0 11 11">
                <path d="M4 .5h3V4h3.500v3H7v3.500H4V7H.5V4H4z" fill="#6cc11f" stroke="#4a9412" />
              </svg>
            </Tab>
          </TabArea>
          <Splitter />
          <HScroll><HThumb /></HScroll>
          <HGrip />
        </TabStrip>
        <StatusBar>
          <span>Sheet 6 / 6</span>
          <span>Default</span>
          <StatusIcons>
            <svg width="12" height="12" viewBox="0 0 12 12"><path d="M0 4h9v6H0z" fill="#808080" /><path d="M9 1.500h3M9 11.500h3M10.500 1v10" stroke="#808080" /></svg>
            <svg width="12" height="12" viewBox="0 0 12 12">
              <path d="M9 3V.5H.5V10.500H9V9" fill="none" stroke="#808080" />
              <path d="M8.500 3v6M6 4.500l5 3M6 7.500l5-3" stroke="#b00" strokeWidth="1.200" />
            </svg>
          </StatusIcons>
          <StatusRight>
            <span>Sum=0</span>
            <Zoom>
              <button aria-label="Zoom out"><svg width="8" height="8" viewBox="0 0 8 8"><path d="M0 4h8" stroke="currentColor" strokeWidth="2" /></svg></button>
              <ZoomSlider type="range" aria-label="Zoom" min="0" max="100" defaultValue="36" />
              <button aria-label="Zoom in"><svg width="8" height="8" viewBox="0 0 8 8"><path d="M0 4h8M4 0v8" stroke="currentColor" strokeWidth="2" /></svg></button>
              <output>80%</output>
            </Zoom>
          </StatusRight>
        </StatusBar>
      </Window>

      <TaskBar>
        <StartButton>
          <svg width="20" height="18" viewBox="0 0 20 18">
            <path d="M0 0H14Q20 0 20 6V18H8Q3 18 3 13V5H0Z" fill="#e8f3d8" />
            <path d="M1.500 1.500H14Q18.500 1.500 18.500 6V16.500H8Q4.500 16.500 4.500 13V3.500H1.500Z" fill="#84bd4c" />
            <path d="M7 4.500V11Q7 13.500 9.500 13.500H13.500Q16 13.500 16 11V8.500Q16 6.500 14.300 6.500T12.600 8.500V11M12.600 8.500Q12.600 6.500 11 6.500T9.500 8.500V11" fill="none" stroke="#fff" strokeWidth="1.500" />
          </svg>
          Menu
        </StartButton>
        <Launchers>
          <button aria-label="Show desktop">
            <svg width="22" height="18" viewBox="0 0 22 18"><path d="M0 1h22v16H0z" fill="#6f9c4d" /><path d="M0 0h22v3H0z" fill="#eee" /><path d="M4 11h14v6H4z" fill="#a9c48f" /><path d="M6 11h10v2H6z" fill="#e5e5e5" /></svg>
          </button>
          <button aria-label="Terminal">
            <svg width="18" height="18" viewBox="0 0 18 18"><rect x="1" y="1" width="16" height="16" rx="1" fill="#26202c" stroke="#cfcfcf" strokeWidth="1.500" /><path d="M4 5l3 2.500L4 10M8 10.500h4" fill="none" stroke="#fff" /></svg>
          </button>
          <button aria-label="Files">
            <svg width="20" height="18" viewBox="0 0 20 18"><path d="M0 1h7l2 2h9v4H0z" fill="#c9d9b5" /><path d="M1 5h19v13H2z" fill="#7fae55" /></svg>
          </button>
        </Launchers>
        <TaskList>
          {tasks.map(([label, icon, active]) => (
            <TaskButton key={label} $active={active}>{taskIcons[icon]}<span>{label}</span></TaskButton>
          ))}
        </TaskList>
        <Tray>
          <TrayStatus>
            <svg width="12" height="14" viewBox="0 0 12 14"><path d="M1 7v5h10V7" fill="none" stroke="currentColor" strokeWidth="2" /></svg>
            <svg width="14" height="14" viewBox="0 0 14 14"><circle cx="7" cy="4" r="3.800" fill="#ddd" /><path d="M5 7h4v3l5 2v2H0v-2l5-2z" fill="#ddd" /></svg>
            <svg width="12" height="14" viewBox="0 0 12 14"><path d="M2 4l7 6-3.500 3V1L9 4l-7 6" fill="none" stroke="#808080" strokeWidth="1.500" /></svg>
            <svg width="14" height="14" viewBox="0 0 14 14"><path d="M1 5.500Q7 0 13 5.500M3 8q4-3.500 8 0M5 10.500q2-2 4 0" fill="none" stroke="currentColor" strokeWidth="1.700" /><circle cx="7" cy="12" r="1.200" fill="currentColor" /></svg>
            <svg width="14" height="14" viewBox="0 0 14 14"><path d="M0 5h3l4-3.500v11L3 9H0z" fill="currentColor" /><path d="M8.500 5q1.500 2 0 4M10.500 3.500q2.500 3.500 0 7M12 2q3.500 5 0 10" fill="none" stroke="currentColor" /></svg>
            <Battery>
              <svg width="14" height="14" viewBox="0 0 14 14"><rect x="1" y="2" width="9" height="11" rx="1" fill="#888" stroke="currentColor" strokeWidth="1.300" /><path d="M3.500 0h4v2h-4z" fill="currentColor" /><path d="M11 4L8 9h2.500L10 13l4-5.500h-2.500z" fill="#fff" /></svg>
              84%
            </Battery>
          </TrayStatus>
          <Chrome />
          <svg width="16" height="16" viewBox="0 0 16 16"><path d="M8 0Q12 2.500 15.500 2.500 15.500 12 8 16 .5 12 .5 2.500 4 2.500 8 0Z" fill="#dfe6ee" /><circle cx="8" cy="7.500" r="4.800" fill="#3d74b5" /><path d="M8 4v1.500M8 6.500V11" stroke="#fff" strokeWidth="1.600" /></svg>
          <Clock>17:49</Clock>
          <svg width="14" height="12" viewBox="0 0 14 12"><path d="M1 1h8v6H1zM11 4h2v7H5V9" fill="none" stroke="currentColor" strokeWidth="1.500" /></svg>
        </Tray>
      </TaskBar>
    </Screen>
  );
}
